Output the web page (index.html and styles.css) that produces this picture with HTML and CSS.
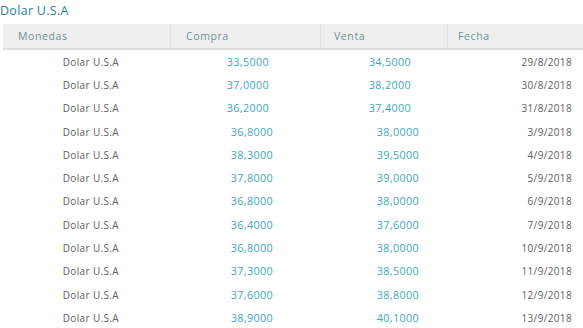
FILE: index.html
```html
<!DOCTYPE html>
<html lang="es">
<head>
<meta charset="utf-8">
<title>Dolar U.S.A</title>
<link rel="stylesheet" href="styles.css">
</head>
<body>
<h2 class="title">Dolar U.S.A</h2>
<div class="table">
  <div class="head">
    <div class="hcell">Monedas</div>
    <div class="hcell">Compra</div>
    <div class="hcell">Venta</div>
    <div class="hcell">Fecha</div>
  </div>
  <div class="row"><div class="c1">Dolar U.S.A</div><div class="c2">33,5000</div><div class="c3">34,5000</div><div class="c4">29/8/2018</div></div>
  <div class="row"><div class="c1">Dolar U.S.A</div><div class="c2">37,0000</div><div class="c3">38,2000</div><div class="c4">30/8/2018</div></div>
  <div class="row"><div class="c1">Dolar U.S.A</div><div class="c2">36,2000</div><div class="c3">37,4000</div><div class="c4">31/8/2018</div></div>
  <div class="row shift"><div class="c1">Dolar U.S.A</div><div class="c2">36,8000</div><div class="c3">38,0000</div><div class="c4">3/9/2018</div></div>
  <div class="row shift"><div class="c1">Dolar U.S.A</div><div class="c2">38,3000</div><div class="c3">39,5000</div><div class="c4">4/9/2018</div></div>
  <div class="row shift"><div class="c1">Dolar U.S.A</div><div class="c2">37,8000</div><div class="c3">39,0000</div><div class="c4">5/9/2018</div></div>
  <div class="row shift"><div class="c1">Dolar U.S.A</div><div class="c2">36,8000</div><div class="c3">38,0000</div><div class="c4">6/9/2018</div></div>
  <div class="row shift"><div class="c1">Dolar U.S.A</div><div class="c2">36,4000</div><div class="c3">37,6000</div><div class="c4">7/9/2018</div></div>
  <div class="row shift"><div class="c1">Dolar U.S.A</div><div class="c2">36,8000</div><div class="c3">38,0000</div><div class="c4">10/9/2018</div></div>
  <div class="row shift"><div class="c1">Dolar U.S.A</div><div class="c2">37,3000</div><div class="c3">38,5000</div><div class="c4">11/9/2018</div></div>
  <div class="row shift"><div class="c1">Dolar U.S.A</div><div class="c2">37,6000</div><div class="c3">38,8000</div><div class="c4">12/9/2018</div></div>
  <div class="row shift"><div class="c1">Dolar U.S.A</div><div class="c2">38,9000</div><div class="c3">40,1000</div><div class="c4">13/9/2018</div></div>
</div>
</body>
</html>
```

FILE: styles.css
```css
html, body {
  margin: 0;
  padding: 0;
  background: #ffffff;
}
body {
  font-family: "Open Sans", "Noto Sans", sans-serif;
  width: 583px;
  height: 328px;
  overflow: hidden;
}
.title {
  margin: 0;
  padding: 2px 0 0 0;
  height: 22px;
  font-size: 12.5px;
  font-weight: 400;
  color: #2f7f92;
  line-height: 18px;
  letter-spacing: 0.3px;
}
.table {
  margin-left: 3px;
}
.head {
  display: grid;
  grid-template-columns: 167px 150px 127px 1fr;
  height: 24px;
  background: #efefef;
  border-bottom: 2px solid #dedede;
}
.hcell {
  font-size: 10.5px;
  color: #67959f;
  line-height: 24px;
  padding-left: 15px;
  letter-spacing: 0.6px;
  border-left: 1px solid #e2e2e2;
}
.hcell:first-child {
  border-left: none;
}
.hcell:nth-child(3) {
  padding-left: 13px;
}
.hcell:nth-child(4) {
  padding-left: 10px;
}
.row {
  display: grid;
  grid-template-columns: 167px 150px 127px 1fr;
  height: 23.3px;
  align-items: center;
  font-size: 10px;
  line-height: 14px;
  letter-spacing: 0.35px;
}
.c1 {
  color: #616161;
  text-align: right;
  padding-right: 51px;
}
.c2 {
  color: #3ea8bc;
  text-align: right;
  padding-right: 51px;
  font-size: 10.8px;
}
.c3 {
  color: #3ea8bc;
  text-align: right;
  padding-right: 36px;
  font-size: 10.8px;
}
.c4 {
  color: #616161;
  text-align: right;
  padding-right: 11px;
}
.shift .c2 {
  padding-right: 47px;
}
.shift .c3 {
  padding-right: 28px;
}
```
